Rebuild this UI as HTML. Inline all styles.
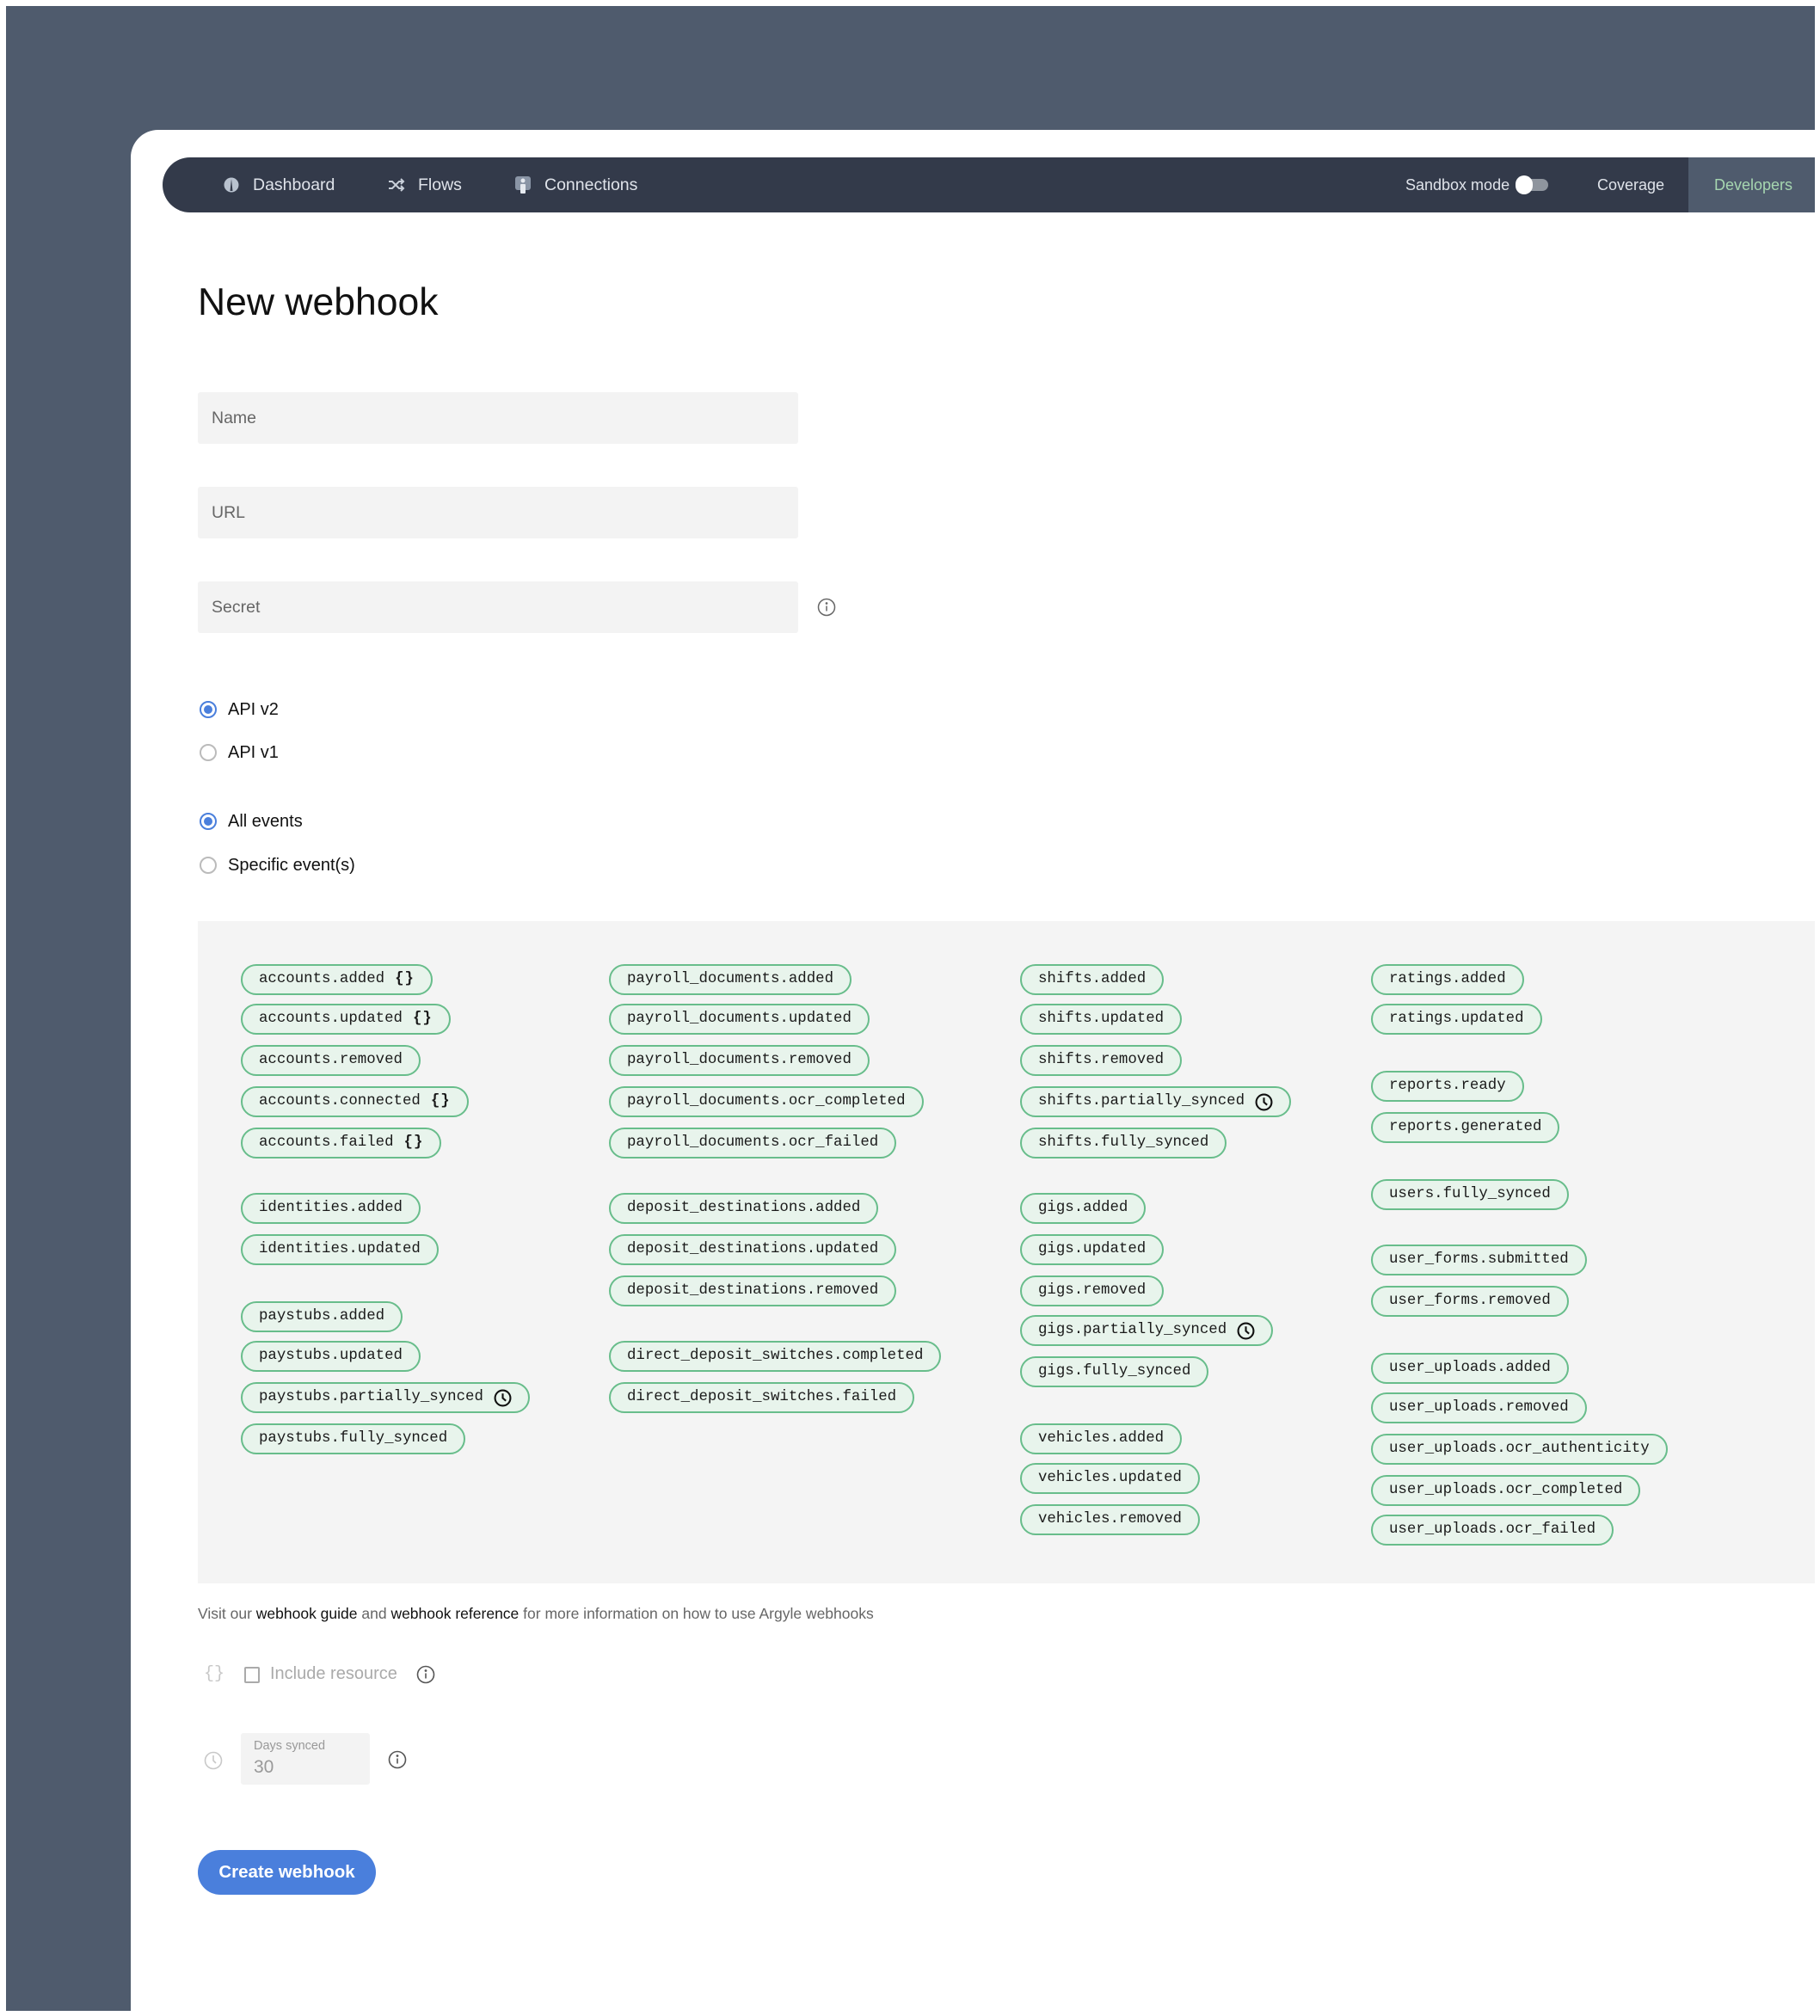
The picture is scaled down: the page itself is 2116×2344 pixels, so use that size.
<!DOCTYPE html>
<html><head><meta charset="utf-8"><style>
*{margin:0;padding:0;box-sizing:border-box}
body{width:2116px;height:2344px;background:#fff;position:relative;overflow:hidden;font-family:"Liberation Sans",sans-serif}
.bg{position:absolute;left:7px;top:7px;width:2103px;height:2331px;background:#4f5b6d}
.panel{position:absolute;left:152px;top:151px;width:1958px;height:2187px;background:#fff;border-top-left-radius:32px}
.abs{position:absolute}
.nav{position:absolute;left:189px;top:183px;width:1921px;height:64px;background:#333a4a;border-radius:32px 0 0 32px}
.navt{position:absolute;top:0;line-height:64px;font-size:19.5px;color:#dfe3ea}
.inp{position:absolute;left:230px;width:698px;height:60px;background:#f3f3f3;border-radius:3px;font-size:19.5px;color:#666;padding-left:16px;line-height:60px}
.radio{position:absolute;left:232px;width:20px;height:20px;border-radius:50%;border:2px solid #bbb;background:#fff}
.radio.on{border-color:#4a7fdc}
.radio.on:after{content:"";position:absolute;left:3px;top:3px;width:10px;height:10px;border-radius:50%;background:#4a7fdc}
.rl{position:absolute;left:265px;font-size:20px;color:#111;line-height:24px}
.box{position:absolute;left:230px;top:1071px;width:1880px;height:770px;background:#f4f4f4}
.p{position:absolute;height:36px;border:2px solid #68bd8b;border-radius:18px;background:#e8f4ec;padding:0 19px;font-family:"Liberation Mono",monospace;font-size:17.4px;color:#1a1a1a;line-height:32px;white-space:nowrap;display:flex;align-items:center;gap:12px}
.p b{font-weight:bold;letter-spacing:1px}
.p svg{width:21px;height:21px}
</style></head><body>
<div class="bg"></div>
<div class="panel"></div>
<div class="nav">
  <svg class="abs" style="left:71px;top:23px" width="18" height="18" viewBox="0 0 18 18"><circle cx="9" cy="9" r="8.5" fill="#b9c2cf"/><path d="M9 2 L10.5 16 L7.5 16 Z" fill="#333a4a"/></svg>
  <div class="navt" style="left:105px">Dashboard</div>
  <svg class="abs" style="left:262px;top:24px" width="20" height="16" viewBox="0 0 20 16" fill="none" stroke="#c9d0da" stroke-width="2"><path d="M1 4h4l8 8h5M1 12h4l8-8h5M15 1l3 3-3 3M15 9l3 3-3 3"/></svg>
  <div class="navt" style="left:297px">Flows</div>
  <svg class="abs" style="left:410px;top:22px" width="18" height="20" viewBox="0 0 18 20"><rect x="0" y="0" width="18" height="16" rx="3" fill="#8a95a6"/><circle cx="9" cy="5" r="2.5" fill="#e6eaf0"/><rect x="6" y="9" width="6" height="11" rx="1" fill="#e6eaf0"/></svg>
  <div class="navt" style="left:444px">Connections</div>
  <div class="navt" style="left:1445px;font-size:18px">Sandbox mode</div>
  <div class="abs" style="left:1577px;top:25px;width:34px;height:14px;border-radius:7px;background:#8f959e"></div>
  <div class="abs" style="left:1573px;top:21px;width:20px;height:22px;border-radius:11px;background:#fff"></div>
  <div class="navt" style="left:1668px;font-size:18px">Coverage</div>
  <div class="abs" style="left:1774px;top:0;width:147px;height:64px;background:#4f5b6d"></div>
  <div class="navt" style="left:1804px;font-size:18px;color:#a6d6b0">Developers</div>
</div>
<div class="abs" style="left:230px;top:327px;font-size:44.5px;color:#111">New webhook</div>
<div class="inp" style="top:456px">Name</div>
<div class="inp" style="top:566px">URL</div>
<div class="inp" style="top:676px">Secret</div>
<svg class="abs" style="left:950px;top:695px" width="22" height="22" viewBox="0 0 22 22" fill="none" stroke="#666" stroke-width="1.5"><circle cx="11" cy="11" r="9.5"/><path d="M11 9.5v6"/><circle cx="11" cy="6.5" r=".6" fill="#666"/></svg>
<div class="radio on" style="top:815px"></div><div class="rl" style="top:813px">API v2</div>
<div class="radio" style="top:865px"></div><div class="rl" style="top:863px">API v1</div>
<div class="radio on" style="top:945px"></div><div class="rl" style="top:943px">All events</div>
<div class="radio" style="top:996px"></div><div class="rl" style="top:994px">Specific event(s)</div>
<div class="box"></div>
<svg width="0" height="0" style="position:absolute"><defs><symbol id="clk" viewBox="0 0 20 20"><circle cx="10" cy="10" r="8.5" fill="none" stroke="#111" stroke-width="2"/><path d="M10 5v5l3.5 3" fill="none" stroke="#111" stroke-width="2"/></symbol></defs></svg>
<div class="p" style="left:280px;top:1121px">accounts.added <b>{}</b></div>
<div class="p" style="left:280px;top:1167px">accounts.updated <b>{}</b></div>
<div class="p" style="left:280px;top:1215px">accounts.removed</div>
<div class="p" style="left:280px;top:1263px">accounts.connected <b>{}</b></div>
<div class="p" style="left:280px;top:1311px">accounts.failed <b>{}</b></div>
<div class="p" style="left:280px;top:1387px">identities.added</div>
<div class="p" style="left:280px;top:1435px">identities.updated</div>
<div class="p" style="left:280px;top:1513px">paystubs.added</div>
<div class="p" style="left:280px;top:1559px">paystubs.updated</div>
<div class="p" style="left:280px;top:1607px">paystubs.partially_synced <svg><use href="#clk"/></svg></div>
<div class="p" style="left:280px;top:1655px">paystubs.fully_synced</div>
<div class="p" style="left:708px;top:1121px">payroll_documents.added</div>
<div class="p" style="left:708px;top:1167px">payroll_documents.updated</div>
<div class="p" style="left:708px;top:1215px">payroll_documents.removed</div>
<div class="p" style="left:708px;top:1263px">payroll_documents.ocr_completed</div>
<div class="p" style="left:708px;top:1311px">payroll_documents.ocr_failed</div>
<div class="p" style="left:708px;top:1387px">deposit_destinations.added</div>
<div class="p" style="left:708px;top:1435px">deposit_destinations.updated</div>
<div class="p" style="left:708px;top:1483px">deposit_destinations.removed</div>
<div class="p" style="left:708px;top:1559px">direct_deposit_switches.completed</div>
<div class="p" style="left:708px;top:1607px">direct_deposit_switches.failed</div>
<div class="p" style="left:1186px;top:1121px">shifts.added</div>
<div class="p" style="left:1186px;top:1167px">shifts.updated</div>
<div class="p" style="left:1186px;top:1215px">shifts.removed</div>
<div class="p" style="left:1186px;top:1263px">shifts.partially_synced <svg><use href="#clk"/></svg></div>
<div class="p" style="left:1186px;top:1311px">shifts.fully_synced</div>
<div class="p" style="left:1186px;top:1387px">gigs.added</div>
<div class="p" style="left:1186px;top:1435px">gigs.updated</div>
<div class="p" style="left:1186px;top:1483px">gigs.removed</div>
<div class="p" style="left:1186px;top:1529px">gigs.partially_synced <svg><use href="#clk"/></svg></div>
<div class="p" style="left:1186px;top:1577px">gigs.fully_synced</div>
<div class="p" style="left:1186px;top:1655px">vehicles.added</div>
<div class="p" style="left:1186px;top:1701px">vehicles.updated</div>
<div class="p" style="left:1186px;top:1749px">vehicles.removed</div>
<div class="p" style="left:1594px;top:1121px">ratings.added</div>
<div class="p" style="left:1594px;top:1167px">ratings.updated</div>
<div class="p" style="left:1594px;top:1245px">reports.ready</div>
<div class="p" style="left:1594px;top:1293px">reports.generated</div>
<div class="p" style="left:1594px;top:1371px">users.fully_synced</div>
<div class="p" style="left:1594px;top:1447px">user_forms.submitted</div>
<div class="p" style="left:1594px;top:1495px">user_forms.removed</div>
<div class="p" style="left:1594px;top:1573px">user_uploads.added</div>
<div class="p" style="left:1594px;top:1619px">user_uploads.removed</div>
<div class="p" style="left:1594px;top:1667px">user_uploads.ocr_authenticity</div>
<div class="p" style="left:1594px;top:1715px">user_uploads.ocr_completed</div>
<div class="p" style="left:1594px;top:1761px">user_uploads.ocr_failed</div>

<div class="abs" style="left:230px;top:1866px;font-size:17.5px;color:#666">Visit our <span style="color:#111">webhook guide</span> and <span style="color:#111">webhook reference</span> for more information on how to use Argyle webhooks</div>
<div class="abs" style="left:237px;top:1935px;font-size:20px;color:#c8c8c8;font-family:'Liberation Mono',monospace">{}</div>
<div class="abs" style="left:284px;top:1938px;width:18px;height:19px;border:2px solid #aaa;border-radius:2px"></div>
<div class="abs" style="left:314px;top:1935px;font-size:20px;color:#aaa">Include resource</div>
<svg class="abs" style="left:484px;top:1936px" width="22" height="22" viewBox="0 0 22 22" fill="none" stroke="#555" stroke-width="1.6"><circle cx="11" cy="11" r="9.5"/><path d="M11 9.5v6"/><circle cx="11" cy="6.5" r=".6" fill="#555"/></svg>
<svg class="abs" style="left:237px;top:2035px" width="22" height="24" viewBox="0 0 22 24" fill="none" stroke="#c8c8c8" stroke-width="1.6"><circle cx="11" cy="12" r="9.5"/><path d="M11 6v6l3 3"/></svg>
<div class="abs" style="left:280px;top:2015px;width:150px;height:60px;background:#f3f3f3;border-radius:3px"></div>
<div class="abs" style="left:295px;top:2022px;font-size:14.5px;color:#999">Days synced</div>
<div class="abs" style="left:295px;top:2043px;font-size:21px;color:#999">30</div>
<svg class="abs" style="left:451px;top:2035px" width="22" height="22" viewBox="0 0 22 22" fill="none" stroke="#555" stroke-width="1.6"><circle cx="11" cy="11" r="9.5"/><path d="M11 9.5v6"/><circle cx="11" cy="6.5" r=".6" fill="#555"/></svg>
<div class="abs" style="left:230px;top:2151px;width:207px;height:52px;border-radius:26px;background:#4a7fdc;color:#fff;font-size:20.5px;font-weight:600;text-align:center;line-height:52px">Create webhook</div>
</body></html>
